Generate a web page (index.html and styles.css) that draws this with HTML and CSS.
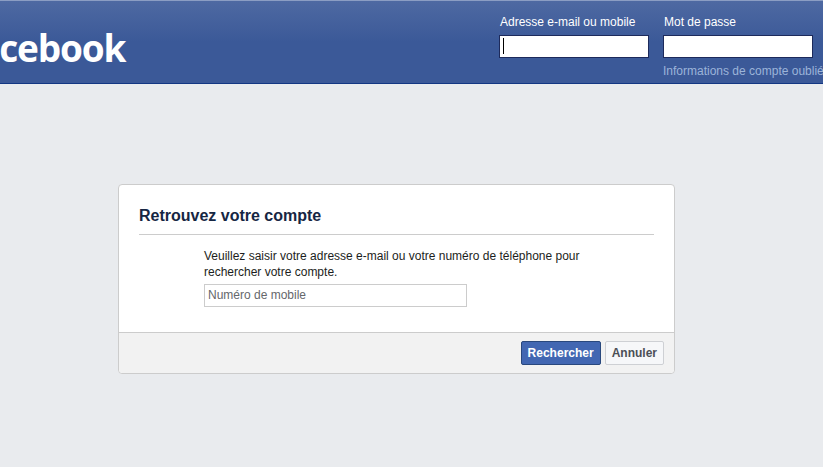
FILE: index.html
```html
<!DOCTYPE html>
<html lang="fr">
<head>
  <meta charset="UTF-8" />
  <title>Retrouvez votre compte</title>
  <link rel="stylesheet" href="styles.css">
</head>
<body>
  <header class="top-bar">
    <div class="logo">facebook</div>
    <form class="login">
      <div class="login-field">
        <label for="email">Adresse e-mail ou mobile</label>
        <div class="login-input focused" id="email"><span class="caret"></span></div>
      </div>
      <div class="login-field">
        <label for="pass">Mot de passe</label>
        <div class="login-input" id="pass"></div>
        <a class="forgot">Informations de compte oubliées ?</a>
      </div>
    </form>
  </header>

  <main class="card">
    <h2>Retrouvez votre compte</h2>
    <div class="card-body">
      <p>Veuillez saisir votre adresse e-mail ou votre numéro de téléphone pour rechercher votre compte.</p>
      <input class="search-input" type="text" placeholder="Numéro de mobile" />
    </div>
    <div class="card-footer">
      <button class="btn btn-primary">Rechercher</button>
      <button class="btn">Annuler</button>
    </div>
  </main>
</body>
</html>
```

FILE: styles.css
```css
html, body {
  margin: 0;
  padding: 0;
  height: 100%;
  overflow: hidden;
  background: #e9ebee;
  font-family: "Liberation Sans", Arial, sans-serif;
  color: #1d2129;
}

.top-bar {
  display: flex;
  box-sizing: border-box;
  height: 84px;
  overflow: hidden;
  background: linear-gradient(#4e69a2, #3b5998 50%);
  border-top: 1px solid #8b9dc3;
  border-bottom: 1px solid #133783;
}

.logo {
  flex: 0 0 499px;
  margin-left: -35px;
  padding-top: 22px;
  margin-right: 35px;
  box-sizing: border-box;
  font-family: "Open Sans", sans-serif;
  font-size: 37px;
  font-weight: 700;
  line-height: 50px;
  letter-spacing: -1.2px;
  color: #fff;
}

.login {
  display: flex;
  gap: 14px;
  padding-top: 13px;
}

.login-field {
  width: 150px;
  flex: none;
}

.login-field label {
  display: block;
  height: 21px;
  padding-left: 1px;
  font-size: 12px;
  line-height: 16px;
  color: #fff;
}

.login-input {
  box-sizing: border-box;
  height: 23px;
  padding: 2px 3px;
  background: #fff;
  border: 1px solid #1d2a5b;
}

.caret {
  display: block;
  width: 1px;
  height: 16px;
  background: #000;
}

.forgot {
  display: block;
  margin-top: 6px;
  white-space: nowrap;
  font-size: 12px;
  line-height: 14px;
  color: #9cb4d8;
}

.card {
  box-sizing: border-box;
  width: 557px;
  height: 190px;
  margin: 100px 0 0 118px;
  background: #fff;
  border: 1px solid #ccc;
  border-radius: 4px;
  display: flex;
  flex-direction: column;
}

.card h2 {
  margin: 0 20px;
  padding: 21px 0 8px;
  height: 20px;
  font-size: 16px;
  line-height: 20px;
  font-weight: bold;
  color: #162643;
  border-bottom: 1px solid #ccc;
}

.card-body {
  flex: 1;
  padding: 13px 84px 0 85px;
}

.card-body p {
  margin: 0 0 4px;
  font-size: 12px;
  line-height: 16px;
  color: #1c1e21;
}

.search-input {
  display: block;
  box-sizing: border-box;
  width: 263px;
  height: 23px;
  padding: 0 3px 2px;
  background: #fff;
  border: 1px solid #ccc;
  font-family: inherit;
  font-size: 12px;
}

.search-input::placeholder {
  color: #65676b;
  opacity: 1;
}

.card-footer {
  display: flex;
  justify-content: flex-end;
  align-items: center;
  gap: 4px;
  height: 40px;
  padding-right: 10px;
  background: #f2f2f2;
  border-top: 1px solid #ccc;
  border-radius: 0 0 4px 4px;
}

.btn {
  box-sizing: border-box;
  height: 24px;
  padding: 0 6px;
  background: #f6f7f9;
  border: 1px solid #ced0d4;
  border-radius: 2px;
  font-family: inherit;
  font-size: 12px;
  font-weight: bold;
  color: #4b4f56;
}

.btn-primary {
  background: #4267b2;
  border-color: #29487d;
  color: #fff;
}
```
